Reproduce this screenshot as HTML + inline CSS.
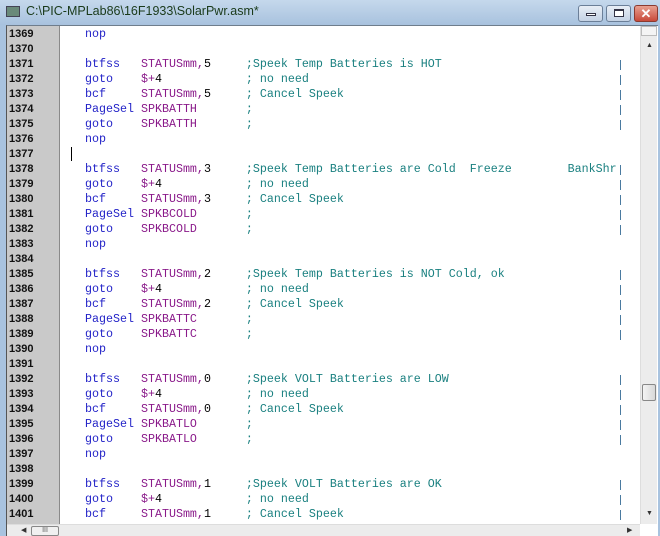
<!DOCTYPE html>
<html><head><style>
*{margin:0;padding:0;box-sizing:border-box}
body{width:660px;height:536px;overflow:hidden;background:#a9c3df;position:relative;font-family:"Liberation Sans",sans-serif}
#title{position:absolute;left:0;top:0;width:660px;height:25px;background:linear-gradient(#c5d8ec,#a8c2de)}
#title .t{position:absolute;left:26px;top:4px;font-size:12.5px;color:#1a3a1a}
#title .ic{position:absolute;left:6px;top:6px;width:14px;height:11px;background:#6a8a7a;border:1px solid #445}
.btn{position:absolute;top:5px;height:17px;border:1px solid #6b7f98;border-radius:3px;background:linear-gradient(#e8eef6,#c4d2e4)}
#frame{position:absolute;left:6px;top:25px;width:652px;height:511px;background:#fff;border-top:1px solid #6f7d8c;border-left:1px solid #555}
#gutter{position:absolute;left:7px;top:26px;width:53px;height:498px;background:#c9c9c9;border-right:1px solid #8a8a8a}
.ln{position:absolute;left:9px;font-size:11px;font-weight:bold;color:#111;height:15px;line-height:15px}
.code{position:absolute;left:85px;font-family:"Liberation Mono",monospace;font-size:11.67px;white-space:pre;height:15px;line-height:15px;color:#000}
.m{color:#2424c8}.o{color:#8a1a8a}.c{color:#1a8080}
.p{position:absolute;left:620px;width:1px;height:10px;background:#4a7aa0}
#vs{position:absolute;left:640px;top:26px;width:17px;height:498px;background:#ececec;border-left:1px solid #ddd}
#hs{position:absolute;left:7px;top:524px;width:633px;height:12px;background:#ececec;border-top:1px solid #ddd}
</style></head><body>
<div id="title"><div class="ic"></div><div class="t">C:\PIC-MPLab86\16F1933\SolarPwr.asm*</div>
<div class="btn" style="left:578px;width:25px"><div style="position:absolute;left:7px;top:7px;width:10px;height:3px;border:1px solid #334;background:#fff"></div></div>
<div class="btn" style="left:606px;width:25px"><div style="position:absolute;left:7px;top:3px;width:10px;height:8px;border:1px solid #334;border-top-width:2px;background:#fff"></div></div>
<div class="btn" style="left:634px;width:24px;background:linear-gradient(#e8a090,#c84a3a);border-color:#8a3a30;color:#fff;font-size:13px;font-weight:bold;text-align:center;line-height:15px">✕</div>
</div>
<div id="frame"></div>
<div id="gutter"></div>
<div id="vs"><div style="position:absolute;left:0;top:0;width:16px;height:10px;border:1px solid #bbb;background:#f4f4f4"></div><div style="position:absolute;left:5px;top:16px;font-size:7px;color:#333">▲</div><div style="position:absolute;left:1px;top:358px;width:14px;height:17px;border:1px solid #888;border-radius:2px;background:linear-gradient(90deg,#f4f4f4,#d8d8d8)"></div><div style="position:absolute;left:5px;top:484px;font-size:7px;color:#333">▼</div></div>
<div id="hs"><div style="position:absolute;left:14px;top:1px;font-size:7px;color:#333">◀</div><div style="position:absolute;left:24px;top:1px;width:28px;height:10px;border:1px solid #888;border-radius:2px;background:#f0f0f0;font-size:7px;text-align:center;line-height:8px;color:#555">III</div><div style="position:absolute;left:620px;top:1px;font-size:7px;color:#333">▶</div></div>
<div style="position:absolute;left:71px;top:147px;width:1px;height:14px;background:#000"></div>
<div id="lines"></div>
<script>
var L=[
["nop"],[],
["btfss","STATUSmm,5",";Speek Temp Batteries is HOT"],
["goto","$+4","; no need"],
["bcf","STATUSmm,5","; Cancel Speek"],
["PageSel","SPKBATTH",";"],
["goto","SPKBATTH",";"],
["nop"],[],
["btfss","STATUSmm,3",";Speek Temp Batteries are Cold  Freeze        BankShr"],
["goto","$+4","; no need"],
["bcf","STATUSmm,3","; Cancel Speek"],
["PageSel","SPKBCOLD",";"],
["goto","SPKBCOLD",";"],
["nop"],[],
["btfss","STATUSmm,2",";Speek Temp Batteries is NOT Cold, ok"],
["goto","$+4","; no need"],
["bcf","STATUSmm,2","; Cancel Speek"],
["PageSel","SPKBATTC",";"],
["goto","SPKBATTC",";"],
["nop"],[],
["btfss","STATUSmm,0",";Speek VOLT Batteries are LOW"],
["goto","$+4","; no need"],
["bcf","STATUSmm,0","; Cancel Speek"],
["PageSel","SPKBATLO",";"],
["goto","SPKBATLO",";"],
["nop"],[],
["btfss","STATUSmm,1",";Speek VOLT Batteries are OK"],
["goto","$+4","; no need"],
["bcf","STATUSmm,1","; Cancel Speek"]];
function pad(s,n){while(s.length<n)s+=" ";return s}
function op(s){var m=s.match(/^(.*?)([,+])(\d)$/);if(!m)return '<span class="o">'+s+'</span>';return '<span class="o">'+m[1]+m[2]+'</span>'+m[3]+' '.repeat(0);}
var h="";
for(var i=0;i<L.length;i++){var y=27+i*15,r=L[i];
h+='<div class="ln" style="top:'+y+'px">'+(1369+i)+'</div>';
if(r.length){var s='<span class="m">'+pad(r[0],8)+'</span>';
if(r[1]){s+=op(r[1])+' '.repeat(15-r[1].length)+'<span class="c">'+r[2]+'</span>';
h+='<div class="p" style="top:'+(y+3)+'px"></div>';}
h+='<div class="code" style="top:'+y+'px">'+s+'</div>';}}
document.getElementById("lines").innerHTML=h;
</script>
</body></html>
